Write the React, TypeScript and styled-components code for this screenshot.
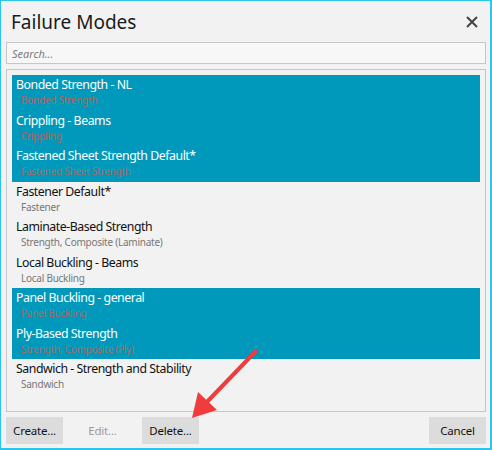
import styled, { createGlobalStyle } from "styled-components"

const Global = createGlobalStyle`
    html, body {
        margin: 0;
        padding: 0;
        background: #f2f2f2;
    }
    * {
        box-sizing: border-box;
    }
`

const Dialog = styled.div`
    position: relative;
    width: 492px;
    height: 450px;
    border: 1px solid #2ac6ee;
    border-width: 1px 2px 2px 1px;
    background: #f2f2f2;
    padding: 0 4px 0 5px;
    display: flex;
    flex-direction: column;
    font-family: "Noto Sans", "Open Sans", sans-serif;
    color: #111;
`

const Header = styled.div`
    height: 41px;
    display: flex;
    align-items: center;
    justify-content: space-between;
    padding: 0 8px 0 5px;
`

const Title = styled.h1`
    margin: 0;
    font-size: 19px;
    font-weight: 400;
    color: #1a1a1a;
`

const Close = styled.button`
    border: none;
    background: transparent;
    padding: 0;
    width: 12px;
    height: 12px;
    display: flex;
    cursor: pointer;
`

const Search = styled.input`
    height: 22px;
    width: 100%;
    border: 1px solid #c6c6c6;
    background: #f7f7f7;
    padding: 0 5px;
    font-family: inherit;
    font-size: 11px;
    outline: none;

    &::placeholder {
        font-style: italic;
        color: #7a7a7a;
    }
`

const List = styled.div`
    margin-top: 5px;
    height: 343px;
    border: 1px solid #c6c6c6;
    padding: 5px;
    display: flex;
    flex-direction: column;
`

const Row = styled.div<{ selected?: boolean }>`
    height: 35.5px;
    padding: 1px 4px 0;
    background: ${p => (p.selected ? "#0099bb" : "transparent")};
    color: ${p => (p.selected ? "#ffffff" : "#111111")};
    display: flex;
    flex-direction: column;
    cursor: default;
`

const Name = styled.span`
    font-size: 12.3px;
    letter-spacing: -0.45px;
    line-height: 17px;
`

const Sub = styled.span<{ selected?: boolean }>`
    font-size: 10px;
    letter-spacing: -0.25px;
    line-height: 14px;
    padding-left: 5px;
    color: ${p => (p.selected ? "#a96a62" : "#777777")};
`

const Footer = styled.div`
    margin-top: 5px;
    display: flex;
    gap: 11px;
`

const Button = styled.button<{ disabled?: boolean }>`
    width: 57px;
    height: 27px;
    border: none;
    background: ${p => (p.disabled ? "transparent" : "#dcdcdc")};
    color: ${p => (p.disabled ? "#9a9a9a" : "#111")};
    font-family: "Noto Sans", "Open Sans", sans-serif;
    font-size: 11.5px;
    letter-spacing: -0.2px;
    padding: 0;
`

const Spacer = styled.div`
    flex: 1;
`

const Arrow = styled.svg`
    position: absolute;
    left: 180px;
    top: 340px;
    pointer-events: none;
`

const modes = [
    { name: "Bonded Strength - NL", sub: "Bonded Strength", selected: true },
    { name: "Crippling - Beams", sub: "Crippling", selected: true },
    { name: "Fastened Sheet Strength Default*", sub: "Fastened Sheet Strength", selected: true },
    { name: "Fastener Default*", sub: "Fastener" },
    { name: "Laminate-Based Strength", sub: "Strength, Composite (Laminate)" },
    { name: "Local Buckling - Beams", sub: "Local Buckling" },
    { name: "Panel Buckling - general", sub: "Panel Buckling", selected: true },
    { name: "Ply-Based Strength", sub: "Strength, Composite (Ply)", selected: true },
    { name: "Sandwich - Strength and Stability", sub: "Sandwich" },
]

const App = () => {
    return (
        <>
            <Global />
            <Dialog>
                <Header>
                    <Title>Failure Modes</Title>
                    <Close aria-label="Close">
                        <svg width="12" height="12" viewBox="0 0 12 12">
                            <path d="M1 1 L11 11 M11 1 L1 11" stroke="#444" strokeWidth="2" />
                        </svg>
                    </Close>
                </Header>
                <Search placeholder="Search..." />
                <List>
                    {modes.map(m => (
                        <Row key={m.name} selected={m.selected}>
                            <Name>{m.name}</Name>
                            <Sub selected={m.selected}>{m.sub}</Sub>
                        </Row>
                    ))}
                </List>
                <Footer>
                    <Button>Create...</Button>
                    <Button disabled>Edit...</Button>
                    <Button>Delete...</Button>
                    <Spacer />
                    <Button>Cancel</Button>
                </Footer>
                <Arrow width="90" height="90" viewBox="0 0 90 90">
                    <path d="M75 10 L24 63" stroke="#f03c3c" strokeWidth="4" strokeLinecap="round" />
                    <path d="M11 77 L17 51 L36 69 Z" fill="#f03c3c" />
                </Arrow>
            </Dialog>
        </>
    )
}

export default App
